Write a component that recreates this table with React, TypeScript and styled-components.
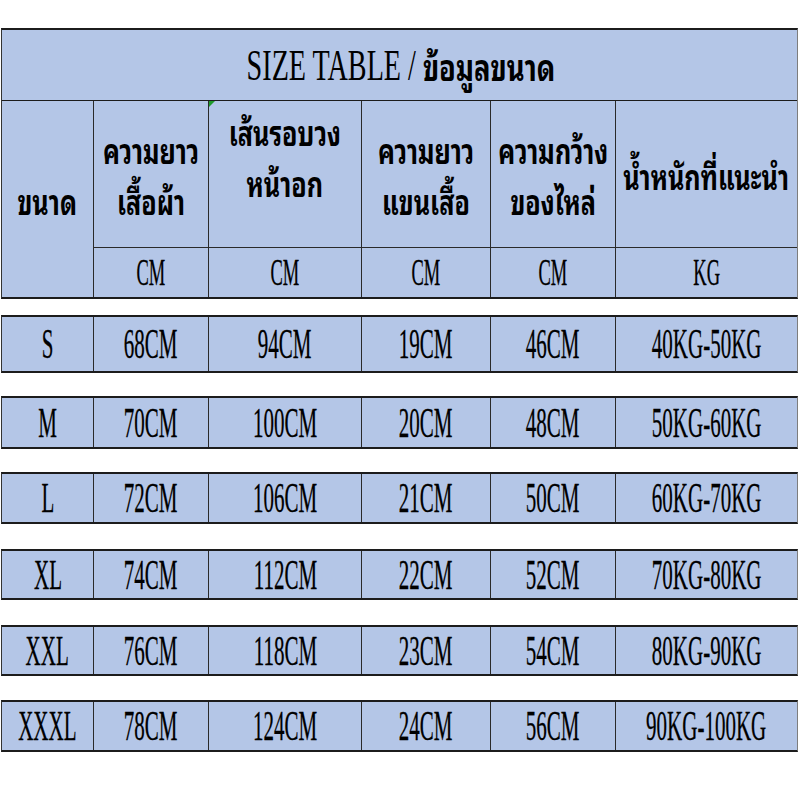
import React from 'react';
import styled, { createGlobalStyle } from 'styled-components';

const GlobalStyle = createGlobalStyle`
  html, body {
    margin: 0;
    padding: 0;
    background: #ffffff;
  }
`;

const CELL_BG = '#b4c6e7';
const LINE = '#1c1c1c';
const COLS = '92px 115px 153px 129px 125px minmax(0, 1fr)';

const Page = styled.div`
  width: 798px;
  padding-top: 28px;
  font-family: 'Noto Sans Thai Looped', 'Noto Sans Thai', 'Noto Sans', sans-serif;
`;

const Block = styled.div<{ $gap?: number }>`
  margin-left: 1px;
  margin-top: ${p => p.$gap ?? 0}px;
  background: ${CELL_BG};
  border-top: 2px solid ${LINE};
  border-bottom: 2px solid ${LINE};
  border-left: 1px solid #333;
  border-right: 1px solid #7d7d7d;
`;

const TitleRow = styled.div`
  height: 70px;
  display: flex;
  align-items: center;
  justify-content: center;
  border-bottom: 1px solid ${LINE};
`;

const Latin = styled.span<{ $size: number; $scale: number }>`
  display: inline-block;
  font-family: 'Liberation Serif', serif;
  font-size: ${p => p.$size}px;
  line-height: 1;
  transform: scaleX(${p => p.$scale});
  color: #000;
  white-space: nowrap;
  -webkit-text-stroke: 0.3px #000;
`;

const TitleLatin = styled(Latin)`
  margin: 0 -40px 0 -46px;
  position: relative;
  top: 1px;
  -webkit-text-stroke: 0;
`;

const ThaiTitle = styled.span`
  display: inline-block;
  font-weight: 700;
  font-size: 36px;
  line-height: 1;
  transform: scaleX(0.76);
  margin: 0 -22px;
  color: #000;
  white-space: nowrap;
`;

const HeadGrid = styled.div`
  display: grid;
  grid-template-columns: ${COLS};
  grid-template-rows: 147px 49px;
`;

const Cell = styled.div<{ $span?: boolean; $last?: boolean; $bottom?: boolean; $top?: boolean }>`
  display: flex;
  align-items: ${p => (p.$top ? 'flex-start' : 'center')};
  justify-content: center;
  text-align: center;
  min-width: 0;
  grid-row: ${p => (p.$span ? 'span 2' : 'auto')};
  border-right: ${p => (p.$last ? 'none' : `1px solid #2a2a2a`)};
  border-bottom: ${p => (p.$bottom ? `1px solid #2a2a2a` : 'none')};
  position: relative;
`;

const HeadText = styled.div<{ $pt?: number }>`
  flex-shrink: 0;
  font-weight: 700;
  font-size: 34px;
  line-height: 51px;
  color: #000;
  white-space: nowrap;
  transform: scaleX(0.74);
  padding-top: ${p => p.$pt ?? 0}px;
`;

const Marker = styled.span`
  position: absolute;
  left: 0;
  top: 0;
  width: 0;
  height: 0;
  border-top: 6px solid #1f9a2a;
  border-right: 6px solid transparent;
`;

const DataRow = styled.div<{ $h: number }>`
  display: grid;
  grid-template-columns: ${COLS};
  height: ${p => p.$h}px;
`;

const headers: { text: string[]; top?: boolean; pt?: number }[] = [
  { text: ['ความยาว', 'เสื้อผ้า'] },
  { text: ['เส้นรอบวง', 'หน้าอก'], top: true, pt: 4 },
  { text: ['ความยาว', 'แขนเสื้อ'] },
  { text: ['ความกว้าง', 'ของไหล่'] },
  { text: ['น้ำหนักที่แนะนำ'] },
];

const units = ['CM', 'CM', 'CM', 'CM', 'KG'];

const rows = [
  { size: 'S', vals: ['68CM', '94CM', '19CM', '46CM', '40KG-50KG'], h: 54, gap: 16 },
  { size: 'M', vals: ['70CM', '100CM', '20CM', '48CM', '50KG-60KG'], h: 49, gap: 23 },
  { size: 'L', vals: ['72CM', '106CM', '21CM', '50CM', '60KG-70KG'], h: 48, gap: 23 },
  { size: 'XL', vals: ['74CM', '112CM', '22CM', '52CM', '70KG-80KG'], h: 47, gap: 25 },
  { size: 'XXL', vals: ['76CM', '118CM', '23CM', '54CM', '80KG-90KG'], h: 47, gap: 25 },
  { size: 'XXXL', vals: ['78CM', '124CM', '24CM', '56CM', '90KG-100KG'], h: 48, gap: 24 },
];

export default function App() {
  return (
    <>
      <GlobalStyle />
      <Page>
        <Block>
          <TitleRow>
            <TitleLatin $size={44} $scale={0.64}>SIZE TABLE /</TitleLatin>
            <ThaiTitle>ข้อมูลขนาด</ThaiTitle>
          </TitleRow>
          <HeadGrid>
            <Cell $span>
              <HeadText>ขนาด</HeadText>
            </Cell>
            {headers.map((h, i) => (
              <Cell key={i} $bottom $top={h.top} $last={i === headers.length - 1}>
                {i === 1 && <Marker />}
                <HeadText $pt={h.pt}>
                  {h.text.map((t, j) => (
                    <div key={j}>{t}</div>
                  ))}
                </HeadText>
              </Cell>
            ))}
            {units.map((u, i) => (
              <Cell key={i} $last={i === units.length - 1}>
                <Latin $size={37} $scale={0.5}>{u}</Latin>
              </Cell>
            ))}
          </HeadGrid>
        </Block>

        {rows.map(r => (
          <Block key={r.size} $gap={r.gap}>
            <DataRow $h={r.h}>
              <Cell>
                <Latin $size={42} $scale={0.5}>{r.size}</Latin>
              </Cell>
              {r.vals.map((v, i) => (
                <Cell key={i} $last={i === r.vals.length - 1}>
                  <Latin $size={42} $scale={0.5}>{v}</Latin>
                </Cell>
              ))}
            </DataRow>
          </Block>
        ))}
      </Page>
    </>
  );
}
